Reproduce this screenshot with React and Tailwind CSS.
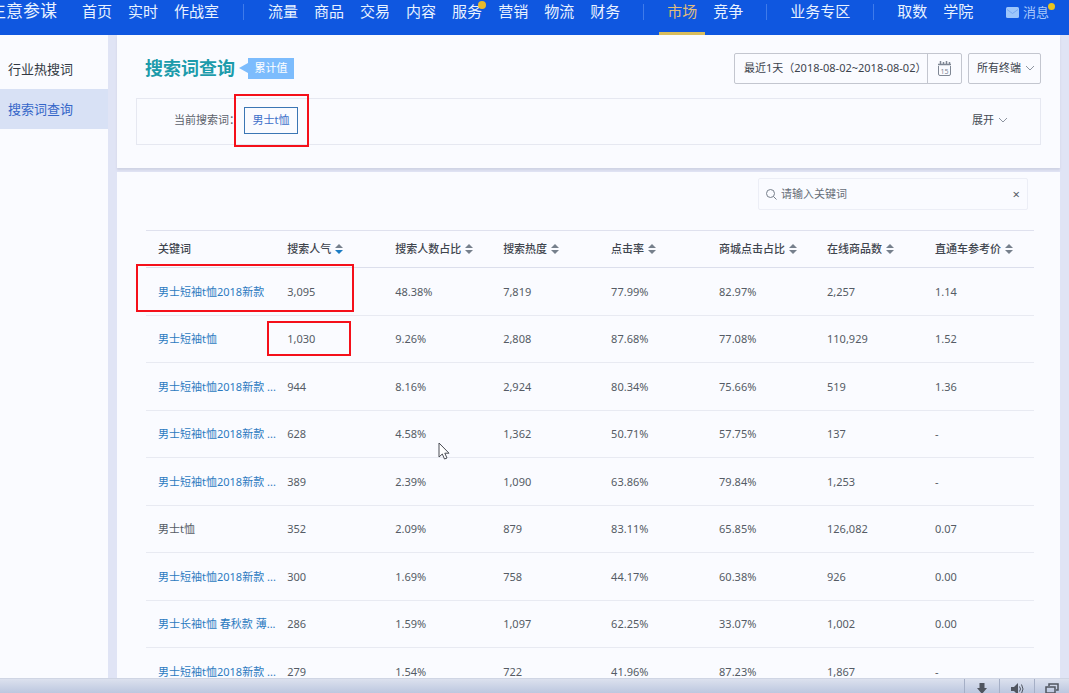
import { useState } from 'react';

const navGroups = [
    [{ name: '首页' }, { name: '实时' }, { name: '作战室' }],
    [
        { name: '流量' },
        { name: '商品' },
        { name: '交易' },
        { name: '内容' },
        { name: '服务', dot: true },
        { name: '营销' },
        { name: '物流' },
        { name: '财务' },
    ],
    [{ name: '市场', active: true }, { name: '竞争' }],
    [{ name: '业务专区' }],
    [{ name: '取数' }, { name: '学院' }],
];

const columns = ['搜索人气', '搜索人数占比', '搜索热度', '点击率', '商城点击占比', '在线商品数', '直通车参考价'];

const rows = [
    { keyword: '男士短袖t恤2018新款', values: ['3,095', '48.38%', '7,819', '77.99%', '82.97%', '2,257', '1.14'] },
    { keyword: '男士短袖t恤', values: ['1,030', '9.26%', '2,808', '87.68%', '77.08%', '110,929', '1.52'] },
    { keyword: '男士短袖t恤2018新款 ...', values: ['944', '8.16%', '2,924', '80.34%', '75.66%', '519', '1.36'] },
    { keyword: '男士短袖t恤2018新款 ...', values: ['628', '4.58%', '1,362', '50.71%', '57.75%', '137', '-'] },
    { keyword: '男士短袖t恤2018新款 ...', values: ['389', '2.39%', '1,090', '63.86%', '79.84%', '1,253', '-'] },
    { keyword: '男士t恤', current: true, values: ['352', '2.09%', '879', '83.11%', '65.85%', '126,082', '0.07'] },
    { keyword: '男士短袖t恤2018新款 ...', values: ['300', '1.69%', '758', '44.17%', '60.38%', '926', '0.00'] },
    { keyword: '男士长袖t恤 春秋款 薄...', values: ['286', '1.59%', '1,097', '62.25%', '33.07%', '1,002', '0.00'] },
    { keyword: '男士短袖t恤2018新款 ...', values: ['279', '1.54%', '722', '41.96%', '87.23%', '1,867', '-'] },
];

const Chevron = ({ className }) => (
    <svg viewBox="0 0 10 6" className={className} fill="none" stroke="currentColor" aria-hidden="true">
        <path d="M1 1l4 4 4-4" />
    </svg>
);

const SortIcon = ({ active }) => (
    <svg viewBox="0 0 8 10" className="w-2 h-2.5" aria-hidden="true">
        <path d="M4 0l4 4H0z" fill="#76808c" />
        <path d="M0 6h8l-4 4z" fill={active ? '#1b7cc4' : '#76808c'} />
    </svg>
);

const TopNav = () => (
    <header className="flex shrink-0 h-[35px] bg-[#0f57e0] text-[15px] leading-[22px] text-[#e8f2ff] whitespace-nowrap overflow-hidden">
        <a href="#home" className="-ml-[11px] mr-[17px] text-[17px]">生意参谋</a>
        <nav className="flex">
            {navGroups.map((group, i) => (
                <div key={i} className="flex">
                    {i > 0 && <span className={`w-px h-4 mt-1 bg-[#3f7bea] ${i > 1 ? 'mx-[15px]' : 'mx-4'}`}></span>}
                    {group.map((item) => (
                        <a
                            key={item.name}
                            href={`#${item.name}`}
                            className={`relative px-2 border-b-3 ${item.active ? 'border-[#d9bd5c] text-[#e0bd7c]' : 'border-transparent'}`}
                        >
                            {item.name}
                            {item.dot && <span className="absolute top-px right-1 size-2 rounded-full bg-[#e6b92c]"></span>}
                        </a>
                    ))}
                </div>
            ))}
        </nav>
        <a href="#message" className="relative flex items-start ml-auto mr-5 gap-1 text-[13px] leading-6 text-[#a9c9fb]">
            <svg viewBox="0 0 13 11" className="w-[13px] h-[11px] mt-[7px]" aria-hidden="true">
                <rect width="13" height="11" rx="1.5" fill="#9dc6fb" />
                <path d="M1 2.5l5.500 4 5.500-4" fill="none" stroke="#78a9f3" />
            </svg>
            消息
            <span className="absolute top-[3px] -right-1.5 size-[7px] rounded-full bg-[#e8c31f]"></span>
        </a>
    </header>
);

const Sidebar = () => (
    <aside className="w-[108px] shrink-0 pt-3.5 bg-[#fafbff] text-[13px] leading-10">
        <a href="#hot" className="block pl-2 text-[#333a44]">行业热搜词</a>
        <a href="#query" className="block pl-2 bg-[#d8e1f5] text-[#3566c8]">搜索词查询</a>
    </aside>
);

const QueryPanel = () => {
    const [device, setDevice] = useState('all');

    return (
        <section className="h-[133px] shrink-0 pt-[18px] pl-[19px] pr-[19px] bg-[#fafbff] shadow-[0_2px_2px_#cfd2e4]">
            <div className="flex items-center h-[30px]">
                <h1 className="ml-[9px] text-lg leading-6 font-bold text-[#1c9bab]">搜索词查询</h1>
                <svg viewBox="0 0 9 10" className="w-[9px] h-2.5 ml-1" aria-hidden="true">
                    <path d="M0 5l9-5v10z" fill="#7cbcfd" />
                </svg>
                <span className="w-[46px] h-[21px] text-center leading-5 bg-[#7cbcfd] text-white">累计值</span>
                <div className="flex w-[228px] h-[31px] ml-auto border border-[#c3c6cf] rounded-xs">
                    <input
                        aria-label="日期范围"
                        readOnly
                        value="最近1天（2018-08-02~2018-08-02）"
                        className="flex-1 min-w-0 pl-[9px] text-[#3c434d] outline-none"
                    />
                    <button aria-label="选择日期" className="flex items-center justify-center w-[34px] border-l border-[#c3c6cf]">
                        <svg viewBox="0 0 15 15" className="size-[15px]" fill="none" stroke="#7f8794" aria-hidden="true">
                            <path d="M1 3.500h13M3.500 0v4M6.500 1v3M9.500 0v4M12.500 1v3" strokeWidth="1.500" />
                            <path d="M1.500 5v8q0 1.500 1.500 1.500h9q1.500 0 1.500-1.500V5" />
                            <text x="7.500" y="12.500" textAnchor="middle" fontSize="7" fill="#7f8794" stroke="none">15</text>
                        </svg>
                    </button>
                </div>
                <div className="relative ml-1.5">
                    <select
                        aria-label="终端"
                        value={device}
                        onChange={(e) => setDevice(e.target.value)}
                        className="appearance-none block w-[73px] h-[31px] pl-2 border border-[#c3c6cf] rounded-xs text-[#3c434d]"
                    >
                        <option value="all">所有终端</option>
                        <option value="pc">PC端</option>
                        <option value="wireless">无线端</option>
                    </select>
                    <Chevron className="absolute right-1.5 top-3 w-2.5 h-1.5 text-[#8d94a0] pointer-events-none" />
                </div>
            </div>
            <div className="flex items-center h-[47px] mt-[15px] pl-[37px] pr-8 pb-[3px] border border-[#e6e8f1]">
                <span className="w-[70px] text-[#5a616b]">当前搜索词：</span>
                <div className="relative">
                    <button className="w-[54px] h-[27px] border border-[#3b76b4] text-[#3d6fc9]">男士t恤</button>
                    <span className="absolute -left-2.5 -top-[13px] w-[75px] h-[53px] border-2 border-[#f5101a] pointer-events-none"></span>
                </div>
                <button className="flex items-center gap-1 ml-auto text-[#444b55]">
                    展开
                    <Chevron className="w-2.5 h-1.5 text-[#8d94a0]" />
                </button>
            </div>
        </section>
    );
};

const ResultPanel = () => {
    const [search, setSearch] = useState('');

    return (
        <section className="flex-1 min-h-0 mt-1 pt-1.5 pl-[29px] pr-[26px] bg-[#fafbff]">
            <div className="flex items-center w-[270px] h-8 ml-auto mr-1.5 px-[7px] border border-[#eceef6] rounded-xs">
                <svg viewBox="0 0 11 11" className="size-[11px] shrink-0" fill="none" stroke="#777f8a" aria-hidden="true">
                    <circle cx="4.500" cy="4.500" r="4" />
                    <path d="M7.500 7.500l3 3" />
                </svg>
                <input
                    aria-label="关键词"
                    value={search}
                    onChange={(e) => setSearch(e.target.value)}
                    placeholder="请输入关键词"
                    className="flex-1 min-w-0 pl-1 outline-none placeholder:text-[#666d77]"
                />
                <button aria-label="清空" onClick={() => setSearch('')} className="text-[13px] text-[#555c66]">×</button>
            </div>
            <div className="relative mt-5">
                <table className="w-full table-fixed text-left border-t border-[#dfe1ee]">
                    <colgroup>
                        <col className="w-[15.9%]" />
                        {columns.slice(1).map((name) => (
                            <col key={name} className="w-[12.16%]" />
                        ))}
                        <col />
                    </colgroup>
                    <thead>
                        <tr className="h-[37px] border-b border-[#dcdfec] text-[#3f454e]">
                            <th className="pl-3 font-medium">关键词</th>
                            {columns.map((name, i) => (
                                <th key={name} className="font-medium">
                                    <button className="flex items-center gap-1 whitespace-nowrap">
                                        {name}
                                        <SortIcon active={i === 0} />
                                    </button>
                                </th>
                            ))}
                        </tr>
                    </thead>
                    <tbody>
                        {rows.map((row, i) => (
                            <tr key={i} className="odd:h-12 even:h-[47px] border-b border-[#e8eaf2] text-[#555b65]">
                                <td className="pl-3 whitespace-nowrap">
                                    {row.current ? row.keyword : <a href="#keyword" className="text-[#2c7abf]">{row.keyword}</a>}
                                </td>
                                {row.values.map((value, j) => (
                                    <td key={j}>{value}</td>
                                ))}
                            </tr>
                        ))}
                    </tbody>
                </table>
                {/* marked cells */}
                <span className="absolute -left-2.5 top-[34px] w-[218px] h-12 border-2 border-[#f5101a] pointer-events-none"></span>
                <span className="absolute left-[121px] top-[91px] w-[84px] h-[35px] border-2 border-[#f5101a] pointer-events-none"></span>
                <svg viewBox="0 0 12 18" className="absolute left-[292px] top-[212px] w-3 h-[18px] pointer-events-none" aria-hidden="true">
                    <path d="M1 1v14l3.300-3 2.200 5 2.500-1-2.200-4.800H11z" fill="#fff" stroke="#4a4d55" />
                </svg>
            </div>
        </section>
    );
};

const StatusBar = () => (
    <footer className="flex justify-end shrink-0 h-[15px] overflow-hidden border-t border-[#cfd5e4] bg-linear-to-b from-[#dce1ee] to-[#bcc7df] text-[#50555f]">
        <button aria-label="下载" className="flex justify-center w-[35px] pt-1 border-l border-[#a5afc6]">
            <svg viewBox="0 0 12 12" className="size-3" fill="currentColor" aria-hidden="true">
                <path d="M3.500 0h5v5H11l-5 6-5-6h2.500z" />
            </svg>
        </button>
        <button aria-label="音量" className="flex justify-center w-[35px] pt-1 border-l border-[#a5afc6]">
            <svg viewBox="0 0 13 12" className="w-[13px] h-3" aria-hidden="true">
                <path d="M0 4h3l4-4v12L3 8H0z" fill="currentColor" />
                <path d="M8.500 3.500q2 2.500 0 5M10.500 1.500q3 4.500 0 9" fill="none" stroke="currentColor" />
            </svg>
        </button>
        <button aria-label="窗口" className="flex justify-center w-[35px] pt-1 border-l border-[#a5afc6]">
            <svg viewBox="0 0 14 12" className="w-3.5 h-3" fill="none" stroke="currentColor" strokeWidth="1.500" aria-hidden="true">
                <path d="M4 3V1h9v6h-2" />
                <rect x="1" y="4" width="9" height="6" />
            </svg>
        </button>
    </footer>
);

const App = () => {
    return (
        <div className="flex flex-col h-screen overflow-hidden bg-[#e0e4f5] text-[11px] leading-4 font-['Noto_Sans','Noto_Sans_CJK_SC',sans-serif]">
            <TopNav />
            <div className="flex flex-1 min-h-0 overflow-hidden">
                <Sidebar />
                <main className="flex flex-col flex-1 min-w-0 ml-[9px] mr-[9px]">
                    <QueryPanel />
                    <ResultPanel />
                </main>
            </div>
            <StatusBar />
        </div>
    );
};

export default App;
